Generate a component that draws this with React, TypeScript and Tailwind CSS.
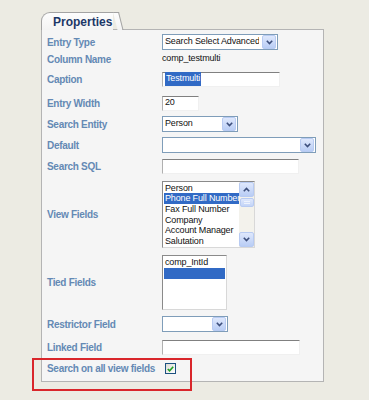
import React from "react"

const LABEL = "whitespace-nowrap text-[10px] font-bold tracking-[-0.3px] text-[#6489b4] [font-family:'Liberation_Sans',Arial,sans-serif]"
const FONT = "whitespace-nowrap text-[9px] tracking-[-0.15px] [font-family:'Liberation_Sans',Arial,sans-serif]"
const VALUE = FONT + " text-[#111]"

function Chevron({ down = true }: { down?: boolean }) {
  return (
    <svg width="7" height="5" viewBox="0 0 7 5" className={down ? "" : "rotate-180"}>
      <path d="M0.8 0.8 L3.5 3.6 L6.2 0.8" fill="none" stroke="#3d4f7c" strokeWidth="1.6" />
    </svg>
  )
}

function DropButton() {
  return (
    <div className="flex h-[14px] w-[14px] shrink-0 items-center justify-center rounded-[2px] border border-[#b8cbf2] bg-gradient-to-b from-[#dfe8fc] to-[#b9cdf5]">
      <Chevron />
    </div>
  )
}

function Select({ width, value }: { width: string; value?: string }) {
  return (
    <div className={"flex h-[16px] items-center justify-between gap-[3px] border border-[#7f9db9] bg-white pl-[2px] pr-[1px] " + width}>
      <span className={"min-w-0 flex-1 overflow-hidden " + VALUE}>{value}</span>
      <DropButton />
    </div>
  )
}

function TextInput({ width, children }: { width: string; children?: React.ReactNode }) {
  return (
    <div className={"flex h-[15px] items-center border-t border-l border-t-[#808080] border-l-[#b0b0b0] border-b border-r border-b-[#f0f0f0] border-r-[#f0f0f0] bg-white pl-[2px] " + width}>
      {children}
    </div>
  )
}

function Row({ label, h, children }: { label: string; h: string; children?: React.ReactNode }) {
  return (
    <div className={"flex items-center " + h}>
      <div className={"w-[120px] shrink-0 pl-[5px] " + LABEL}>{label}</div>
      <div className="flex items-center">{children}</div>
    </div>
  )
}

const VIEW_FIELDS = ["Person", "Phone Full Number", "Fax Full Number", "Company", "Account Manager", "Salutation"]

export default function App() {
  return (
    <div className="h-[400px] w-[369px] overflow-hidden bg-[#ecebe3] pl-[41px] pt-[12px]">
      {/* tab */}
      <div className="relative z-10 -mb-px flex h-[18px] w-[78px]">
        <div className="flex h-full flex-1 items-center rounded-tl-[9px] border-l border-t border-[#a3a3a3] bg-gradient-to-b from-[#fdfdfd] to-[#f3f3f3] pl-[11px]">
          <span className="text-[12px] font-bold text-[#1c3767] [font-family:'Liberation_Sans',Arial,sans-serif]">Properties</span>
        </div>
        <div className="h-full w-[6px] origin-top-left skew-x-[14deg] border-r border-t border-[#a3a3a3] bg-gradient-to-b from-[#fdfdfd] to-[#f3f3f3]" />
      </div>

      {/* panel */}
      <div className="h-[353px] w-[283px] border border-[#b4b4b4] bg-[#f5f5f5] pt-[4px]">
        <Row label="Entry Type" h="h-[16px]">
          <Select width="w-[116px]" value="Search Select Advanced" />
        </Row>
        <Row label="Column Name" h="h-[18px]">
          <span className={VALUE}>comp_testmulti</span>
        </Row>
        <Row label="Caption" h="h-[22px]">
          <TextInput width="w-[118px]">
            <span className={"bg-[#316ac5] px-px text-white " + FONT}>Testmulti</span>
          </TextInput>
        </Row>
        <Row label="Entry Width" h="h-[26px]">
          <TextInput width="w-[37px]">
            <span className={VALUE}>20</span>
          </TextInput>
        </Row>
        <Row label="Search Entity" h="h-[16px]">
          <Select width="w-[76px]" value="Person" />
        </Row>
        <Row label="Default" h="h-[26px]">
          <Select width="w-[154px]" />
        </Row>
        <Row label="Search SQL" h="h-[16px]">
          <TextInput width="w-[137px]" />
        </Row>
        <Row label="View Fields" h="h-[80px]">
          <div className="flex h-[67px] w-[93px] border border-t-[#8a8a8a] border-l-[#8a8a8a] border-b-[#d8d8d8] border-r-[#d8d8d8] bg-white">
            <div className="min-w-0 flex-1 overflow-hidden pl-px pt-px">
              {VIEW_FIELDS.map(function (f, i) {
                const sel = i === 1
                return (
                  <div
                    key={f}
                    className={"h-[10.7px] pl-px leading-[10.7px] " + FONT + (sel ? " bg-[#316ac5] text-white" : " text-[#111]")}
                  >
                    {f}
                  </div>
                )
              })}
            </div>
            <div className="flex w-[15px] shrink-0 flex-col bg-[#f3f2ec]">
              <div className="flex h-[15px] items-center justify-center rounded-[2px] border border-[#b8cbf2] bg-gradient-to-b from-[#dfe8fc] to-[#b9cdf5]">
                <Chevron down={false} />
              </div>
              <div className="flex-1 pt-[1px]">
                <div className="mx-auto flex h-[9px] w-[14px] flex-col items-center justify-center gap-px rounded-[2px] border border-[#b8cbf2] bg-gradient-to-b from-[#dfe8fc] to-[#c3d4f7]">
                  <div className="h-px w-[6px] bg-[#eef3fd]" />
                  <div className="h-px w-[6px] bg-[#eef3fd]" />
                </div>
              </div>
              <div className="flex h-[15px] items-center justify-center rounded-[2px] border border-[#b8cbf2] bg-gradient-to-b from-[#dfe8fc] to-[#b9cdf5]">
                <Chevron />
              </div>
            </div>
          </div>
        </Row>
        <Row label="Tied Fields" h="h-[56px]">
          <div className="h-[55px] w-[65px] border border-t-[#8a8a8a] border-l-[#8a8a8a] border-b-[#d8d8d8] border-r-[#d8d8d8] bg-white pt-px">
            <div className={"h-[11px] pl-[2px] leading-[11px] " + VALUE}>comp_IntId</div>
            <div className="mx-px h-[11px] bg-[#316ac5]" />
          </div>
        </Row>
        <Row label="Restrictor Field" h="h-[28px]">
          <Select width="w-[66px]" />
        </Row>
        <Row label="Linked Field" h="h-[18px]">
          <TextInput width="w-[138px]" />
        </Row>
        <div className="relative">
          <Row label="Search on all view fields" h="h-[25px]">
            <div className="ml-[3px] flex h-[11px] w-[11px] items-center justify-center border border-[#1c5180] bg-gradient-to-br from-[#dcdcd5] to-white">
              <svg width="7" height="6" viewBox="0 0 7 6">
                <path d="M0.8 3 L2.6 4.8 L6.2 0.8" fill="none" stroke="#21a121" strokeWidth="1.6" />
              </svg>
            </div>
          </Row>
          <div className="absolute left-[-10px] top-[2px] h-[33px] w-[160px] border-2 border-[#d9262b]" />
        </div>
      </div>
    </div>
  )
}
